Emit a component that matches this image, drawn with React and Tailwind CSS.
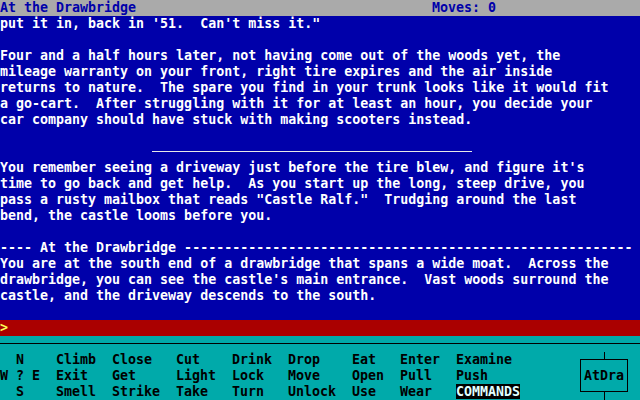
const story = [
  `put it in, back in '51.  Can't miss it."`,
  "",
  "Four and a half hours later, not having come out of the woods yet, the",
  "mileage warranty on your front, right tire expires and the air inside",
  "returns to nature.  The spare you find in your trunk looks like it would fit",
  "a go-cart.  After struggling with it for at least an hour, you decide your",
  "car company should have stuck with making scooters instead.",
  "",
  null,
  "You remember seeing a driveway just before the tire blew, and figure it's",
  "time to go back and get help.  As you start up the long, steep drive, you",
  `pass a rusty mailbox that reads "Castle Ralf."  Trudging around the last`,
  "bend, the castle looms before you.",
  "",
  "---- At the Drawbridge " + "-".repeat(56),
  "You are at the south end of a drawbridge that spans a wide moat.  Across the",
  "drawbridge, you can see the castle's main entrance.  Vast woods surround the",
  "castle, and the driveway descends to the south.",
  "",
];

// each column of the verb menu, top to bottom
const menu = [
  { w: "w-[56px]", items: ["  N", "W ? E", "  S"] },
  { w: "w-[56px]", items: ["Climb", "Exit", "Smell"] },
  { w: "w-[64px]", items: ["Close", "Get", "Strike"] },
  { w: "w-[56px]", items: ["Cut", "Light", "Take"] },
  { w: "w-[56px]", items: ["Drink", "Lock", "Turn"] },
  { w: "w-[64px]", items: ["Drop", "Move", "Unlock"] },
  { w: "w-[48px]", items: ["Eat", "Open", "Use"] },
  { w: "w-[56px]", items: ["Enter", "Pull", "Wear"] },
];

const StoryLine = ({ text }) => {
  if (text === null) {
    return (
      <div className="h-4 pt-[7px]">
        <div className="ml-[152px] w-[320px] h-px bg-[#e8e8e8]" />
      </div>
    );
  }
  return <div className="h-4 whitespace-pre">{text}</div>;
};

const MapBox = () => (
  <div className="ml-auto mr-[8px] w-[56px] flex flex-col items-center">
    <div className="w-px h-[7px] bg-black" />
    <div className="w-[48px] h-[33px] border border-black flex items-center justify-center text-black">
      AtDra
    </div>
    <div className="w-px flex-1 bg-black" />
  </div>
);

export default function App() {
  return (
    <div
      className="w-[640px] h-[400px] flex flex-col overflow-hidden text-[13.3px] leading-4 font-bold bg-[#0000aa]"
      style={{ fontFamily: '"DejaVu Sans Mono", "Liberation Mono", monospace' }}
    >
      {/* status bar */}
      <div className="h-4 shrink-0 flex bg-[#aaaaaa] text-[#0000aa] whitespace-pre">
        <span className="w-[432px]">At the Drawbridge</span>
        <span>Moves: 0</span>
      </div>

      {/* transcript */}
      <div className="h-[304px] shrink-0 text-white">
        {story.map((line, i) => (
          <StoryLine key={i} text={line} />
        ))}
      </div>

      {/* input line */}
      <div className="h-4 shrink-0 bg-[#aa0000] text-[#ffff55]">&gt;</div>

      {/* verb menu */}
      <div className="h-16 shrink-0 flex flex-col bg-[#00aaaa] text-black">
        <div className="h-4 pt-[7px]">
          <div className="h-px bg-black" />
        </div>
        <div className="flex-1 flex">
          {menu.map((col, i) => (
            <div key={i} className={`${col.w} flex flex-col whitespace-pre`}>
              {col.items.map((item) => (
                <div key={item} className="h-4">
                  {item}
                </div>
              ))}
            </div>
          ))}
          <div className="flex flex-col">
            <div className="h-4">Examine</div>
            <div className="h-4">Push</div>
            <div className="h-4">
              <span className="bg-black text-[#e0ffff]">COMMANDS</span>
            </div>
          </div>
          <MapBox />
        </div>
      </div>
    </div>
  );
}
